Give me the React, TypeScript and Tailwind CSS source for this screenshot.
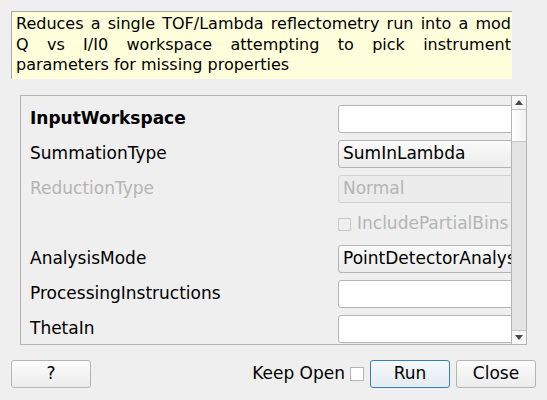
import React from "react";

const font = { fontFamily: '"DejaVu Sans", sans-serif' };

function Input({ children, disabled }: { children?: React.ReactNode; disabled?: boolean }) {
  return (
    <div
      className={
        "h-[28px] w-[200px] rounded-[3px] border flex items-center pl-[5px] whitespace-nowrap overflow-hidden " +
        (disabled ? "border-[#cfcfcf] bg-[#efefef] text-[#b4b4b4]" : "border-[#b4b4b4] bg-white text-black")
      }
    >
      {children}
    </div>
  );
}

function Combo({ children, disabled }: { children?: React.ReactNode; disabled?: boolean }) {
  return (
    <div
      className={
        "h-[28px] w-[200px] rounded-[3px] border flex items-center pl-[4px] whitespace-nowrap overflow-hidden " +
        (disabled
          ? "border-[#d2d2d2] bg-[#ececec] text-[#b4b4b4]"
          : "border-[#b4b4b4] bg-gradient-to-b from-[#fafafa] to-[#ececec] text-black")
      }
    >
      {children}
    </div>
  );
}

export default function App() {
  return (
    <div className="w-[547px] h-[400px] bg-[#efefef] overflow-hidden text-[17px]" style={font}>
      <div className="pt-[11px] pl-[11px]">
        <div className="w-[501px] h-[68px] border-t border-l border-[#a8a8a8] bg-[#ffffdc] pl-[4px] pr-[1px] pt-[2px] leading-[20.5px] text-[16px] text-black">
          <div className="text-justify [text-align-last:justify] whitespace-nowrap">Reduces a single TOF/Lambda reflectometry run into a mod</div>
          <div className="whitespace-nowrap flex justify-between">
            <span>Q</span><span>vs</span><span>I/I0</span><span>workspace</span><span>attempting</span><span>to</span><span>pick</span><span>instrument</span>
          </div>
          <div>parameters for missing properties</div>
        </div>
      </div>

      <div className="ml-[20px] mt-[16px] w-[507px] h-[250px] border border-[#b4b4b4] flex">
        <div className="flex-1 overflow-hidden pl-[9px] pt-[9px] flex flex-col gap-[7px]">
          {[
            { label: "InputWorkspace", bold: true, w: <Input /> },
            { label: "SummationType", w: <Combo>SumInLambda</Combo> },
            { label: "ReductionType", dis: true, w: <Combo disabled>Normal</Combo> },
            {
              label: "",
              w: (
                <div className="h-[28px] flex items-center gap-[6px] text-[#b4b4b4] whitespace-nowrap">
                  <div className="w-[13px] h-[13px] border border-[#c8c8c8] bg-[#efefef]" />
                  <span>IncludePartialBins</span>
                </div>
              ),
            },
            { label: "AnalysisMode", w: <Combo>PointDetectorAnalysis</Combo> },
            { label: "ProcessingInstructions", w: <Input /> },
            { label: "ThetaIn", w: <Input /> },
          ].map((r, i) => (
            <div key={i} className="flex items-center h-[28px] shrink-0">
              <div
                className={
                  "w-[308px] shrink-0 " +
                  (r.bold ? "font-bold text-black " : "") +
                  (r.dis ? "text-[#b4b4b4]" : "text-black")
                }
              >
                {r.label}
              </div>
              <div className="shrink-0">{r.w}</div>
            </div>
          ))}
        </div>
        <div className="w-[15px] border-l border-[#b4b4b4] flex flex-col bg-[#e4e4e4]">
          <div className="h-[14px] bg-[#f7f7f7] border-b border-[#c4c4c4] flex items-center justify-center">
            <svg width="8" height="5" viewBox="0 0 8 5"><path d="M0 5 L4 0 L8 5 Z" fill="#4a4a4a" /></svg>
          </div>
          <div className="h-[32px] bg-gradient-to-r from-white to-[#f2f2f2] border-b border-[#c4c4c4]" />
          <div className="flex-1" />
          <div className="h-[14px] bg-[#f7f7f7] border-t border-[#c4c4c4] flex items-center justify-center">
            <svg width="8" height="5" viewBox="0 0 8 5"><path d="M0 0 L8 0 L4 5 Z" fill="#4a4a4a" /></svg>
          </div>
        </div>
      </div>

      <div className="mt-[15px] pl-[11px] pr-[11px] flex items-center">
        <button className="w-[80px] h-[28px] rounded-[3px] border border-[#b4b4b4] bg-gradient-to-b from-[#fbfbfb] to-[#ececec] text-black">?</button>
        <div className="flex-1" />
        <span className="text-black">Keep Open</span>
        <div className="ml-[5px] w-[14px] h-[14px] border border-[#b4b4b4] bg-white" />
        <button className="ml-[6px] w-[80px] h-[28px] rounded-[3px] border border-[#3a7cb4] bg-gradient-to-b from-[#f6f9fc] to-[#e4ebf1] text-black">Run</button>
        <button className="ml-[6px] w-[80px] h-[28px] rounded-[3px] border border-[#b4b4b4] bg-gradient-to-b from-[#fbfbfb] to-[#ececec] text-black">Close</button>
      </div>
    </div>
  );
}
